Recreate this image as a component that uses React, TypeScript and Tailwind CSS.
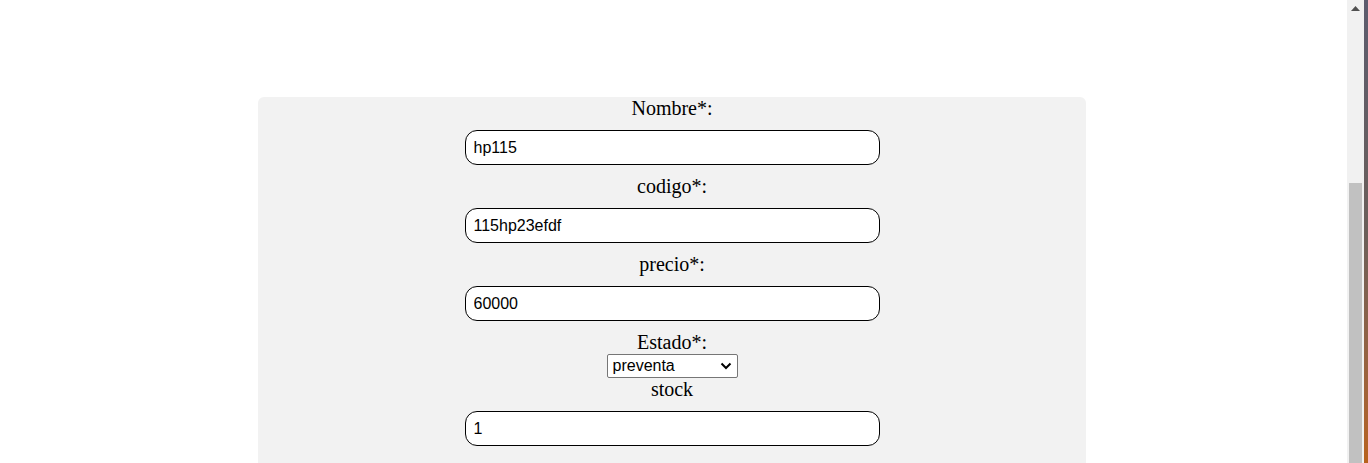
import React from "react";

const labelCls =
  "block text-center text-[20px] leading-[23px] text-black [font-family:'Liberation_Serif','Times_New_Roman',serif]";
const inputCls =
  "block mx-auto my-[10px] w-[415px] h-[35px] box-border border border-black rounded-[12px] bg-white pl-[8px] text-[16px] text-black outline-none [font-family:'Liberation_Sans',Arial,sans-serif]";

function Field({ label, value }: { label: string; value: string }) {
  return (
    <>
      <label className={labelCls}>{label}</label>
      <input className={inputCls} defaultValue={value} />
    </>
  );
}

export default function App() {
  return (
    <div className="flex h-[463px] w-[1368px] overflow-hidden bg-white">
      <main className="flex-1 pt-[97px]">
        <div className="ml-[258px] w-[828px] h-[400px] rounded-t-[6px] bg-[#f2f2f2]">
          <Field label="Nombre*:" value="hp115" />
          <Field label="codigo*:" value="115hp23efdf" />
          <Field label="precio*:" value="60000" />
          <label className={labelCls + " mt-[10px]"}>Estado*:</label>
          <div className="relative mx-auto w-[131px] h-[24px]">
            <select
              defaultValue="preventa"
              className="appearance-none block w-[131px] h-[24px] box-border border border-[#767676] rounded-[2px] bg-white pl-[5px] text-[16px] leading-[22px] text-black [font-family:'Liberation_Sans',Arial,sans-serif]"
            >
              <option value="preventa">preventa</option>
              <option value="disponible">disponible</option>
              <option value="agotado">agotado</option>
            </select>
            <svg
              className="pointer-events-none absolute right-[6px] top-[8px]"
              width="12"
              height="8"
              viewBox="0 0 12 8"
            >
              <path d="M1.5 1.5 L6 6 L10.5 1.5" fill="none" stroke="#000" strokeWidth="2" />
            </svg>
          </div>
          <label className={labelCls}>stock</label>
          <input className={inputCls} defaultValue="1" />
        </div>
      </main>
      <div className="relative w-[17px] h-full bg-[#f1f1f1] flex flex-col">
        <div className="h-[17px] flex items-center justify-center">
          <svg width="9" height="5" viewBox="0 0 9 5">
            <path d="M0 5 L4.5 0 L9 5 Z" fill="#505050" />
          </svg>
        </div>
        <div className="mt-[166px] ml-[2px] w-[13px] flex-1 bg-[#c1c1c1]" />
      </div>
      <div className="w-[4px] h-full bg-gradient-to-b from-[#5c5c6e] via-[#6b5f5a] to-[#b8621c]" />
    </div>
  );
}
